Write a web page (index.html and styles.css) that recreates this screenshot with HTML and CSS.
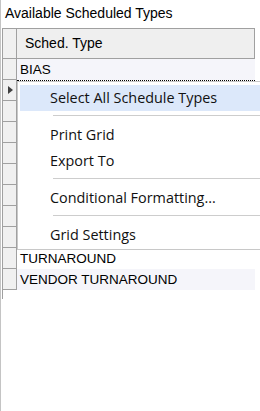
FILE: index.html
```html
<!DOCTYPE html>
<html>
<head>
<link rel="stylesheet" href="styles.css">
</head>
<body>
<div class="panel">
    <div class="caption">Available Scheduled Types</div>
    <div class="grid">
        <div class="row head"><div class="rh"></div><div class="cell">Sched. Type</div></div>
        <div class="row odd"><div class="rh"></div><div class="cell">BIAS</div></div>
        <div class="row focus"><div class="rh"><span class="arrow"></span></div><div class="cell"></div></div>
        <div class="row odd"><div class="rh"></div><div class="cell"></div></div>
        <div class="row"><div class="rh"></div><div class="cell"></div></div>
        <div class="row odd"><div class="rh"></div><div class="cell"></div></div>
        <div class="row"><div class="rh"></div><div class="cell"></div></div>
        <div class="row odd"><div class="rh"></div><div class="cell"></div></div>
        <div class="row"><div class="rh"></div><div class="cell"></div></div>
        <div class="row odd"><div class="rh"></div><div class="cell"></div></div>
        <div class="row"><div class="rh"></div><div class="cell">TURNAROUND</div></div>
        <div class="row odd"><div class="rh"></div><div class="cell">VENDOR TURNAROUND</div></div>
    </div>
    <div class="menu">
        <div class="item active">Select All Schedule Types</div>
        <div class="sep"></div>
        <div class="item">Print Grid</div>
        <div class="item">Export To</div>
        <div class="sep"></div>
        <div class="item">Conditional Formatting...</div>
        <div class="sep"></div>
        <div class="item">Grid Settings</div>
    </div>
</div>
</body>
</html>
```

FILE: styles.css
```css
body{
    margin:0;
    overflow:hidden;
    background:#fff;
}
.panel{
    position:relative;
    height:411px;
    border-left:1px solid #c4c4c4;
    font-family:"Liberation Sans", Arial, sans-serif;
    color:#000;
}
.caption{
    height:28px;
    box-sizing:border-box;
    padding:5px 0 0 4px;
    font-size:14px;
    line-height:16px;
}
.grid{
    margin-left:1px;
    width:254px;
    border-left:1px solid #a0a0a0;
    padding-bottom:9px;
}
.row{
    display:flex;
    height:21px;
    font-size:13.5px;
}
.rh{
    width:13px;
    flex:none;
    background:#f0f0f0;
    border-right:1px solid #a0a0a0;
    border-bottom:1px solid #a0a0a0;
    position:relative;
}
.cell{
    width:238px;
    box-sizing:border-box;
    padding-left:3px;
    line-height:21px;
    white-space:nowrap;
}
.row.odd .cell{
    background:#f5f5fa;
}
.row.head{
    height:31px;
    font-size:14px;
}
.row.head .rh{
    border-top:1px solid #a0a0a0;
}
.row.head .cell{
    background:#efefef;
    border:1px solid #a0a0a0;
    border-left:none;
    padding-left:8px;
    line-height:29px;
}
.row.focus .cell{
    border-top:1px dotted #000;
}
.arrow{
    position:absolute;
    left:5px;
    top:6px;
    border-left:5px solid #404040;
    border-top:4px solid transparent;
    border-bottom:4px solid transparent;
}
.menu{
    position:absolute;
    left:16px;
    top:81px;
    width:250px;
    background:#fff;
    border:1px solid #c8c8c8;
    padding:3px 2px 1px 2px;
    font-family:"Open Sans", "Noto Sans", sans-serif;
    font-size:14.4px;
    color:#111;
}
.item{
    height:26px;
    line-height:26px;
    padding-left:30px;
}
.item.active{
    background:#dce8fa;
}
.sep{
    height:1px;
    background:#cdcdcd;
    margin:4px 0 6px 33px;
}
```
